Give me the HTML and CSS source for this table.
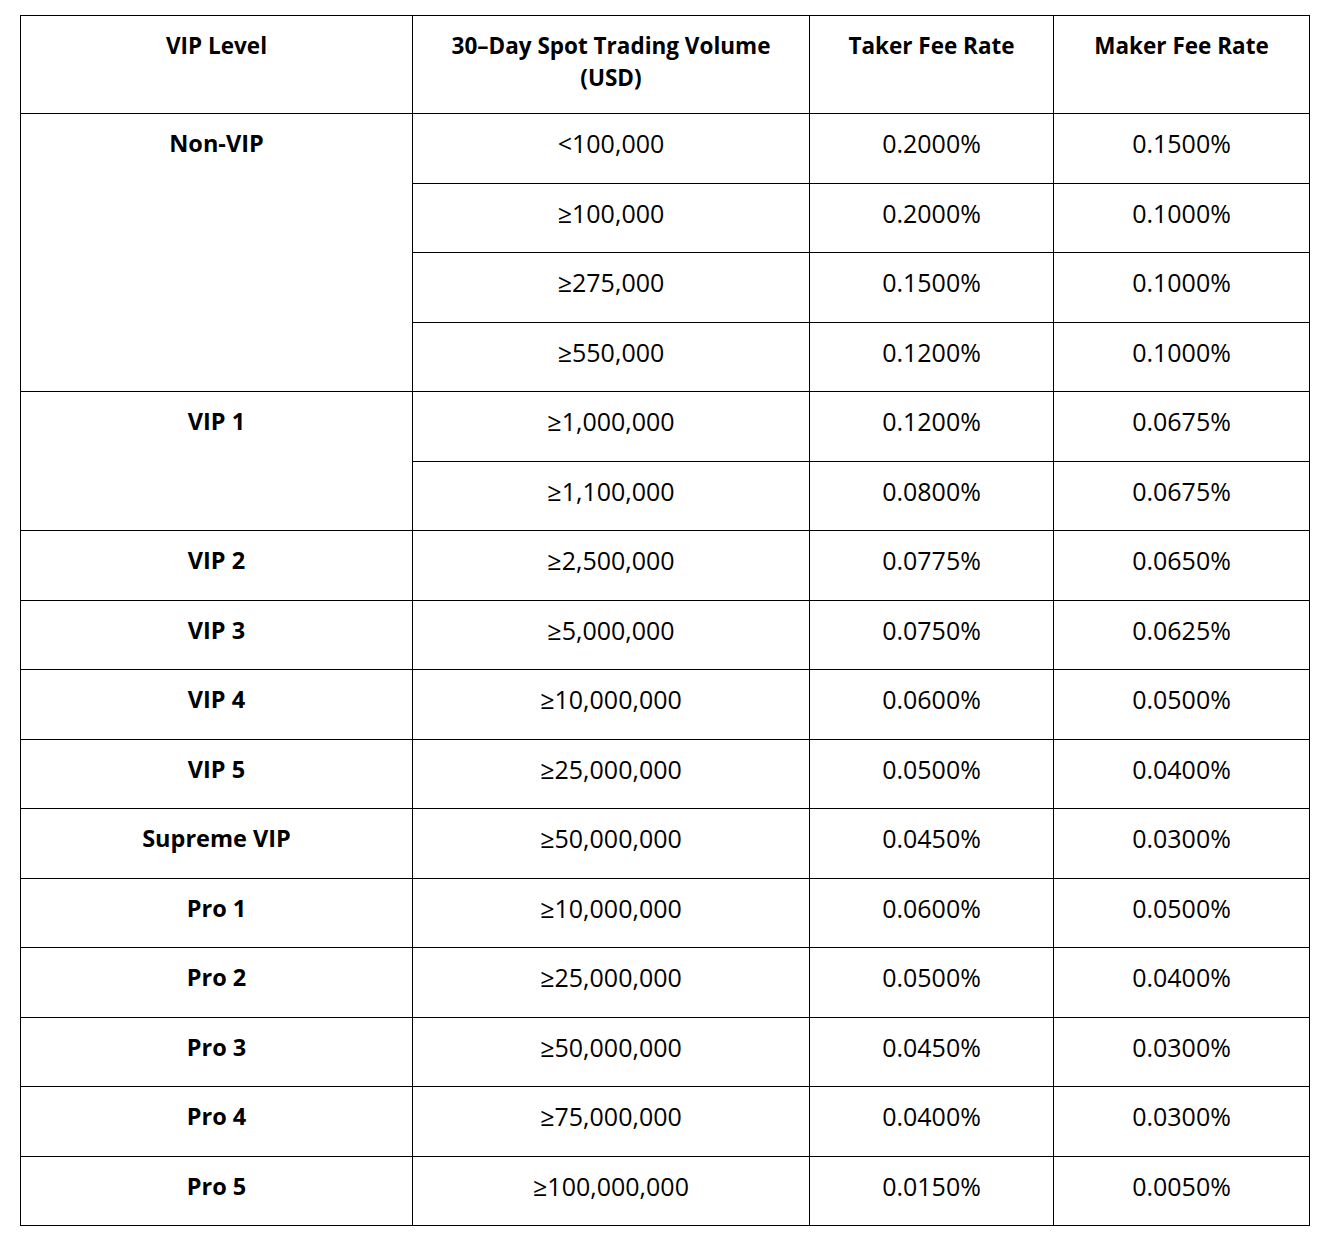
FILE: index.html
```html
<!DOCTYPE html>
<html lang="en">
<head>
<meta charset="utf-8">
<title>Spot Trading Fee Rates</title>
<link rel="stylesheet" href="styles.css">
</head>
<body>
<table class="fees">
  <colgroup>
    <col class="c1"><col class="c2"><col class="c3"><col class="c4">
  </colgroup>
  <thead>
    <tr><th>VIP Level</th><th>30–Day Spot Trading Volume (USD)</th><th>Taker Fee Rate</th><th>Maker Fee Rate</th></tr>
  </thead>
  <tbody>
    <tr><td class="lvl" rowspan="4">Non-VIP</td><td>&lt;100,000</td><td>0.2000%</td><td>0.1500%</td></tr>
    <tr><td>≥100,000</td><td>0.2000%</td><td>0.1000%</td></tr>
    <tr><td>≥275,000</td><td>0.1500%</td><td>0.1000%</td></tr>
    <tr><td>≥550,000</td><td>0.1200%</td><td>0.1000%</td></tr>
    <tr><td class="lvl" rowspan="2">VIP 1</td><td>≥1,000,000</td><td>0.1200%</td><td>0.0675%</td></tr>
    <tr><td>≥1,100,000</td><td>0.0800%</td><td>0.0675%</td></tr>
    <tr><td class="lvl">VIP 2</td><td>≥2,500,000</td><td>0.0775%</td><td>0.0650%</td></tr>
    <tr><td class="lvl">VIP 3</td><td>≥5,000,000</td><td>0.0750%</td><td>0.0625%</td></tr>
    <tr><td class="lvl">VIP 4</td><td>≥10,000,000</td><td>0.0600%</td><td>0.0500%</td></tr>
    <tr><td class="lvl">VIP 5</td><td>≥25,000,000</td><td>0.0500%</td><td>0.0400%</td></tr>
    <tr><td class="lvl">Supreme VIP</td><td>≥50,000,000</td><td>0.0450%</td><td>0.0300%</td></tr>
    <tr><td class="lvl">Pro 1</td><td>≥10,000,000</td><td>0.0600%</td><td>0.0500%</td></tr>
    <tr><td class="lvl">Pro 2</td><td>≥25,000,000</td><td>0.0500%</td><td>0.0400%</td></tr>
    <tr><td class="lvl">Pro 3</td><td>≥50,000,000</td><td>0.0450%</td><td>0.0300%</td></tr>
    <tr><td class="lvl">Pro 4</td><td>≥75,000,000</td><td>0.0400%</td><td>0.0300%</td></tr>
    <tr><td class="lvl">Pro 5</td><td>≥100,000,000</td><td>0.0150%</td><td>0.0050%</td></tr>
  </tbody>
</table>
</body>
</html>
```
FILE: styles.css
```css
html, body {
  margin: 0;
  background: #ffffff;
}
body {
  padding: 15px 0 0 20px;
  font-family: "Open Sans", "Noto Sans", "Liberation Sans", sans-serif;
  color: #000;
}
.fees {
  border-collapse: collapse;
  table-layout: fixed;
  width: 1289px;
  font-size: 25px;
  line-height: 32px;
}
.c1 { width: 392px; }
.c2 { width: 397px; }
.c3 { width: 244px; }
.c4 { width: 256px; }
.fees th,
.fees td {
  border: 1px solid #000;
  text-align: center;
  vertical-align: top;
}
.fees th {
  font-weight: 700;
  font-size: 22.5px;
  padding: 14px 20px 19px;
  height: 63px;
}
.fees td {
  padding: 13px 10px 0;
  height: 55.5px;
}
.fees td.lvl {
  font-weight: 700;
  font-size: 23.5px;
}
```
